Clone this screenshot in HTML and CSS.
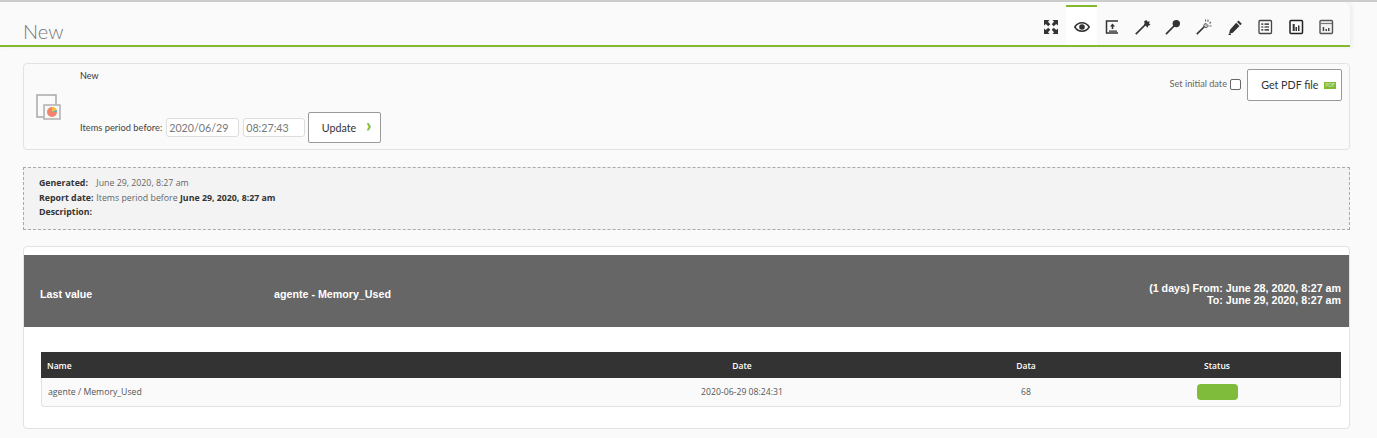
FILE: index.html
```html
<!DOCTYPE html>
<html lang="en">
<head>
  <meta charset="UTF-8" />
  <title>New</title>
  <link rel="stylesheet" href="styles.css">
</head>
<body>
  <header class="page-header">
    <h1>New</h1>
    <div class="tabs">
      <a class="tab"><svg viewBox="0 0 16 16" width="16" height="16"><path d="M1 1h5.500L5 2.800 7.300 5.200 5.200 7.300 2.800 5 1 6.500zM15 1v5.500L13.200 5l-2.400 2.300-2.100-2.100L11 2.800 9.500 1zM1 15V9.500L2.800 11l2.400-2.300 2.100 2.100L5 13.200 6.500 15zM15 15H9.500l1.500-1.800-2.300-2.400 2.100-2.100L13.200 11 15 9.500z" fill="#333"/></svg></a>
      <a class="tab active"><svg viewBox="0 0 16 16" width="16" height="16"><path d="M.8 8C2.700 5 5 3.800 8 3.800s5.300 1.200 7.200 4.200c-1.900 3-4.200 4.200-7.200 4.200S2.700 11 .8 8z" fill="none" stroke="#333" stroke-width="1.500"/><circle cx="8" cy="8" r="2.800" fill="#333"/></svg></a>
      <a class="tab"><svg viewBox="0 0 16 16" width="16" height="16"><path d="M14 2H2.500v12H14" fill="none" stroke="#333" stroke-width="1.500"/><path d="M8.500 4.500 11 7.500H9.300V10H7.700V7.500H6zM5 11.500h8v1.200H5z" fill="#333"/></svg></a>
      <a class="tab"><svg viewBox="0 0 16 16" width="16" height="16"><path d="M.8 15.200 10 6" stroke="#333" stroke-width="1.700"/><path d="M11.500 1l1 1.800 2.200-.5-.6 2.300 1.500 1.300-2.200.7-.7 2.200-2-2-2-.4.900-2.100-.5-2z" fill="#333"/></svg></a>
      <a class="tab"><svg viewBox="0 0 16 16" width="16" height="16"><path d="M1 15.200 9.500 6.500" stroke="#333" stroke-width="1.700"/><circle cx="11.300" cy="4.600" r="3.700" fill="#333"/></svg></a>
      <a class="tab"><svg viewBox="0 0 16 16" width="16" height="16"><path d="M.8 15.200 8.500 7.500" stroke="#333" stroke-width="1.700"/><path d="M9.500 4l3 3-2.500 2-2.500-2.500z" fill="#bbb" stroke="#666"/><path d="M12 .5v2.500M15 3l-1.500 1.500M15.500 7h-2M9.500.5v2" stroke="#666" stroke-width="1.100"/></svg></a>
      <a class="tab"><svg viewBox="0 0 16 16" width="16" height="16"><path d="M11.500 1.500 14.800 4.800 13.300 6.300 10 3zM9.200 3.800l3.300 3.300-6.700 6.700L2 15l1-4.200z" fill="#333"/><path d="M1.500 15.500H4" stroke="#333"/></svg></a>
      <a class="tab"><svg viewBox="0 0 16 16" width="16" height="16"><rect x="2" y="1.500" width="12.500" height="13" rx="1" fill="#fafafa" stroke="#444" stroke-width="1.300"/><path d="M4.300 4.300h2v1.600h-2zM7.500 4.300H12v1.600H7.500zM4.300 7.200h2v1.600h-2zM7.500 7.200H12v1.600H7.500zM4.300 10.100h2v1.600h-2zM7.500 10.100H12v1.600H7.500z" fill="#555"/></svg></a>
      <a class="tab"><svg viewBox="0 0 16 16" width="16" height="16"><rect x="2" y="1.500" width="12.500" height="13" rx="1" fill="#fafafa" stroke="#222" stroke-width="1.500"/><path d="M4.700 5h2v7h-2zM7.500 8h1.500v4H7.500zM10 6.500h1.500V12H10z" fill="#333"/></svg></a>
      <a class="tab"><svg viewBox="0 0 16 16" width="16" height="16"><rect x="2" y="1.500" width="12.500" height="13" rx="1" fill="#f2f2f2" stroke="#555" stroke-width="1.400"/><path d="M2.500 4.500h11.500" stroke="#777" stroke-width="1.200"/><path d="M4.700 8h1.500v4H4.700zM7.500 10h1.500v2H7.500zM10 9h1.500v3H10z" fill="#444"/></svg></a>
    </div>
  </header>

  <main class="content">
    <section class="box report-form">
      <svg class="report-icon" viewBox="0 0 26 28" width="26" height="28">
        <rect x="1" y="1" width="19" height="22" fill="#fafafa" stroke="#a8a8a8" stroke-width="1.500"/>
        <rect x="8" y="11" width="16" height="14" fill="#f7f7f7" stroke="#b0b0b0" stroke-width="1.500"/>
        <circle cx="16" cy="18" r="5" fill="#f1846f"/>
        <path d="M16 18v-5a5 5 0 0 1 4.600 3z" fill="#f5c33b"/>
        <path d="M16 18l4.600-2a5 5 0 0 1 .4 2z" fill="#5bb5d5"/>
      </svg>
      <div class="form-main">
        <div class="report-name">New</div>
        <div class="period-row">
          <label>Items period before:</label>
          <input class="date-input" type="text" value="2020/06/29">
          <input class="time-input" type="text" value="08:27:43">
          <button class="btn update-btn">Update <span class="chevron">&#8250;</span></button>
        </div>
      </div>
      <div class="form-side">
        <label class="initial-date">Set initial date</label>
        <span class="checkbox"></span>
        <button class="btn pdf-btn">Get PDF file <span class="pdf-badge">PDF</span></button>
      </div>
    </section>

    <section class="report-info">
      <div class="info-row"><b class="info-label">Generated:</b> June 29, 2020, 8:27 am</div>
      <div class="info-row"><b class="info-label">Report date:</b> Items period before <b>June 29, 2020, 8:27 am</b></div>
      <div class="info-row"><b class="info-label">Description:</b></div>
    </section>

    <section class="box report-item">
      <div class="item-title">
        <div class="item-type">Last value</div>
        <div class="item-name">agente - Memory_Used</div>
        <div class="item-period">(1 days) From: June 28, 2020, 8:27 am<br>To: June 29, 2020, 8:27 am</div>
      </div>
      <table class="data-table">
        <thead>
          <tr>
            <th class="col-name">Name</th>
            <th class="col-date">Date</th>
            <th class="col-data">Data</th>
            <th class="col-status">Status</th>
          </tr>
        </thead>
        <tbody>
          <tr>
            <td class="cell-name">agente / Memory_Used</td>
            <td>2020-06-29 08:24:31</td>
            <td>68</td>
            <td class="cell-status"><span class="status-ok"></span></td>
          </tr>
        </tbody>
      </table>
    </section>
  </main>
</body>
</html>
```

FILE: styles.css
```css
* {
  box-sizing: border-box;
}

body {
  margin: 0;
  height: 438px;
  overflow: hidden;
  background: #fafafa;
  border-top: 2px solid #ccc;
  font-family: 'Open Sans', sans-serif;
  color: #333;
}

.page-header {
  width: 1350px;
  height: 45px;
  display: flex;
  justify-content: space-between;
  border-bottom: 2px solid #82b92e;
  border-radius: 0 6px 0 0;
  box-shadow: 2px 0 4px rgba(0, 0, 0, 0.06);
}

.page-header h1 {
  margin: 18px 0 0 23px;
  font-family: Lato, sans-serif;
  font-size: 20px;
  font-weight: 300;
  line-height: 22px;
  color: #777;
}

.tabs {
  display: flex;
  margin: 3px 8.4px 0 0;
}

.tab {
  width: 30.6px;
  display: flex;
  justify-content: center;
  padding-top: 12px;
  border-top: 2px solid transparent;
}

.tab.active {
  background: #fff;
  border-top-color: #82b92e;
}

.content {
  width: 1350px;
  padding: 16px 0 0 23px;
}

.box {
  background: #fafafa;
  border: 1px solid #e2e2e2;
  border-radius: 4px;
}

.report-form {
  height: 87px;
  display: flex;
  padding: 5px 7px 6px 12px;
}

.report-icon {
  margin-top: 25px;
}

.form-main {
  margin-left: 18px;
  flex: 1;
  display: flex;
  flex-direction: column;
  justify-content: space-between;
}

.report-name {
  margin-top: 1px;
  font-family: Lato, sans-serif;
  font-size: 9px;
  line-height: 12px;
  color: #333;
}

.period-row {
  display: flex;
  align-items: center;
  font-family: Lato, sans-serif;
  font-size: 9.3px;
  color: #444;
}

.period-row input {
  height: 19px;
  padding: 0 2px;
  background: #fff;
  border: 1px solid #ddd;
  border-radius: 3px;
  font-family: Lato, sans-serif;
  font-size: 10.7px;
  color: #777;
}

.date-input {
  width: 73px;
  margin-left: 4px;
}

.time-input {
  width: 62px;
  margin-left: 4px;
}

.btn {
  background: #fff;
  border: 1px solid #999;
  border-radius: 2px;
  font-family: Lato, sans-serif;
  font-size: 10.7px;
  color: #333;
}

.update-btn {
  width: 73px;
  height: 31px;
  margin-left: 3px;
  padding: 0 0 2px 4px;
}

.chevron {
  margin-left: 7px;
  font-size: 19px;
  font-weight: 900;
  line-height: 11px;
  color: #82b92e;
}

.form-side {
  display: flex;
  align-items: flex-start;
}

.initial-date {
  margin-top: 9px;
  font-family: Lato, sans-serif;
  font-size: 9.2px;
  color: #666;
}

.checkbox {
  width: 11px;
  height: 11px;
  margin: 10px 6px 0 3px;
  background: #fff;
  border: 1px solid #666;
  border-radius: 2px;
}

.pdf-btn {
  width: 95px;
  height: 32px;
  padding: 0 5px 2px 13px;
  white-space: nowrap;
}

.pdf-badge {
  display: inline-block;
  margin-left: 3px;
  padding: 0 1px;
  background: #82b92e;
  font-size: 5px;
  line-height: 7px;
  color: #dcedc0;
  vertical-align: 2px;
}

.report-info {
  height: 63px;
  margin-top: 17px;
  padding: 8px 15px;
  background: #f3f3f3;
  border: 1px dashed #aaa;
  font-size: 8.8px;
  color: #666;
}

.info-row {
  height: 14.7px;
  line-height: 14.7px;
}

.info-row b {
  color: #333;
}

.info-label {
  display: inline-block;
  width: 55px;
}

.report-item {
  height: 183px;
  margin-top: 16px;
  padding-top: 8px;
  background: #fff;
}

.item-title {
  height: 72px;
  display: flex;
  align-items: center;
  padding: 6px 8px 0 16px;
  background: #666;
  font-family: 'Liberation Sans', sans-serif;
  font-size: 10.7px;
  font-weight: bold;
  color: #fff;
}

.item-type {
  width: 234px;
}

.item-name {
  flex: 1;
}

.item-period {
  text-align: right;
  line-height: 12px;
}

.data-table {
  width: 1300px;
  margin: 25px 0 0 17px;
  table-layout: fixed;
  border-collapse: separate;
  border-spacing: 0;
  font-size: 8.7px;
  text-align: center;
}

.data-table th {
  height: 26px;
  padding: 0;
  background: #333;
  font-size: 8.5px;
  font-weight: 600;
  color: #fff;
}

.data-table td {
  height: 29px;
  padding: 0;
  background: #fafafa;
  border-bottom: 1px solid #e2e2e2;
  color: #555;
}

.data-table td:first-child {
  border-left: 1px solid #e2e2e2;
  border-radius: 0 0 0 3px;
}

.data-table td:last-child {
  border-right: 1px solid #e2e2e2;
  border-radius: 0 0 3px 0;
}

.col-name {
  width: 484px;
}

.col-date {
  width: 434px;
}

.col-data {
  width: 134px;
}

.col-status {
  width: 248px;
}

.data-table th.col-name {
  padding-left: 6px;
  text-align: left;
}

.data-table td.cell-name {
  padding-left: 6px;
  text-align: left;
}

.data-table td.cell-status {
  padding-left: 2px;
}

.status-ok {
  display: block;
  width: 41px;
  height: 16px;
  margin: 0 auto;
  background: #80bc3c;
  border-radius: 4px;
}
```
